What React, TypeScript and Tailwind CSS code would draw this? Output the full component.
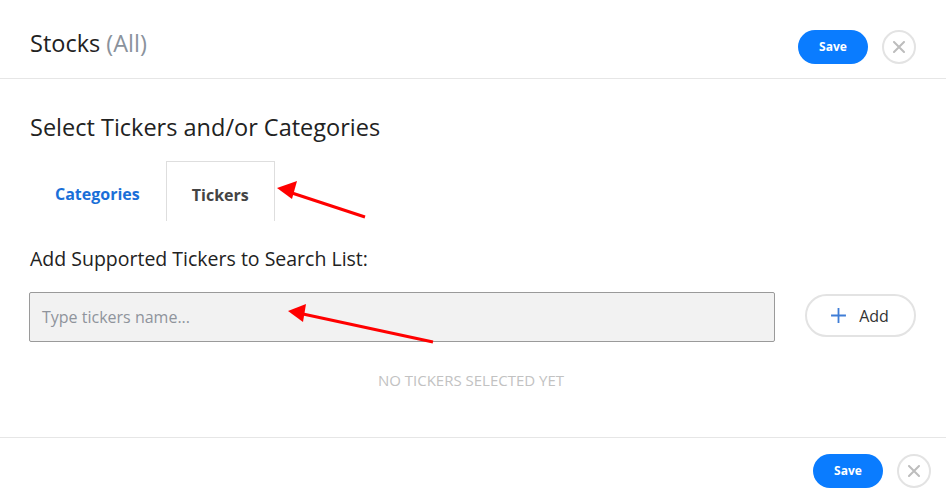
import React from "react";

function CloseBtn() {
  return (
    <button className="w-[34px] h-[34px] rounded-full border-2 border-[#e3e3e3] flex items-center justify-center bg-white">
      <svg width="12" height="12" viewBox="0 0 12 12">
        <path d="M1 1 L11 11 M11 1 L1 11" stroke="#bdbdbd" strokeWidth="2" strokeLinecap="round" />
      </svg>
    </button>
  );
}

function SaveBtn() {
  return (
    <button className="w-[70px] h-[34px] rounded-full bg-[#0a7cff] text-white text-[12px] font-bold flex items-center justify-center">
      Save
    </button>
  );
}

export default function App() {
  return (
    <div
      className="relative w-[946px] h-[504px] bg-white overflow-hidden text-[#222]"
      style={{ fontFamily: '"Open Sans", "Noto Sans", sans-serif' }}
    >
      <div className="h-[79px] flex items-center justify-between pl-[30px] pr-[30px] border-b border-[#e6e6e6]">
        <div className="text-[23.5px] leading-none pt-[10px]">
          Stocks <span className="text-[#8a929c]">(All)</span>
        </div>
        <div className="flex items-center gap-[14px] pt-[15px]">
          <SaveBtn />
          <CloseBtn />
        </div>
      </div>

      <div className="px-[30px]">
        <div className="pt-[33px] text-[23.5px] leading-[30px]">Select Tickers and/or Categories</div>
        <div className="flex mt-[19px] pl-[25px]">
          <div className="h-[60px] flex items-center pt-[6px] pr-[26px] text-[16px] font-bold text-[#1a6fd8]">Categories</div>
          <div className="h-[60px] w-[109px] flex items-center justify-center pt-[6px] border border-b-0 border-[#dedede] text-[16px] font-bold text-[#444]">
            Tickers
          </div>
        </div>
        <div className="mt-[25px] text-[19.5px] leading-[26px]">Add Supported Tickers to Search List:</div>
        <div className="flex items-center mt-[20px]">
          <div className="w-[746px] h-[50px] shrink-0 -ml-px bg-[#f2f2f2] border border-[#9a9a9a] rounded-[2px] flex items-center pl-[12px] text-[16px] text-[#8f949c]">
            Type tickers name...
          </div>
          <button className="ml-[30px] -mt-[3px] w-[111px] h-[43px] shrink-0 rounded-full border-2 border-[#e3e3e3] flex items-center justify-center gap-[12px] text-[16px] text-[#333] pr-[2px]">
            <svg width="17" height="17" viewBox="0 0 16 16">
              <path d="M8 1 V15 M1 8 H15" stroke="#3f7dd6" strokeWidth="1.7" />
            </svg>
            Add
          </button>
        </div>
        <div className="mt-[27px] text-center text-[15px] text-[#c2c2c2] pr-[4px]">NO TICKERS SELECTED YET</div>
      </div>

      <div className="absolute left-0 right-0 top-[437px] border-t border-[#e6e6e6] h-[67px] flex items-center justify-end pr-[15px] gap-[14px]">
        <SaveBtn />
        <CloseBtn />
      </div>

      <svg className="absolute inset-0 pointer-events-none" width="946" height="504">
        <line x1="365" y1="217" x2="292" y2="193" stroke="#f00" strokeWidth="3" />
        <polygon points="277,188 297,181 292,199" fill="#f00" />
        <line x1="433" y1="342" x2="303" y2="314" stroke="#f00" strokeWidth="3" />
        <polygon points="288,311 306,304 303,322" fill="#f00" />
      </svg>
    </div>
  );
}
